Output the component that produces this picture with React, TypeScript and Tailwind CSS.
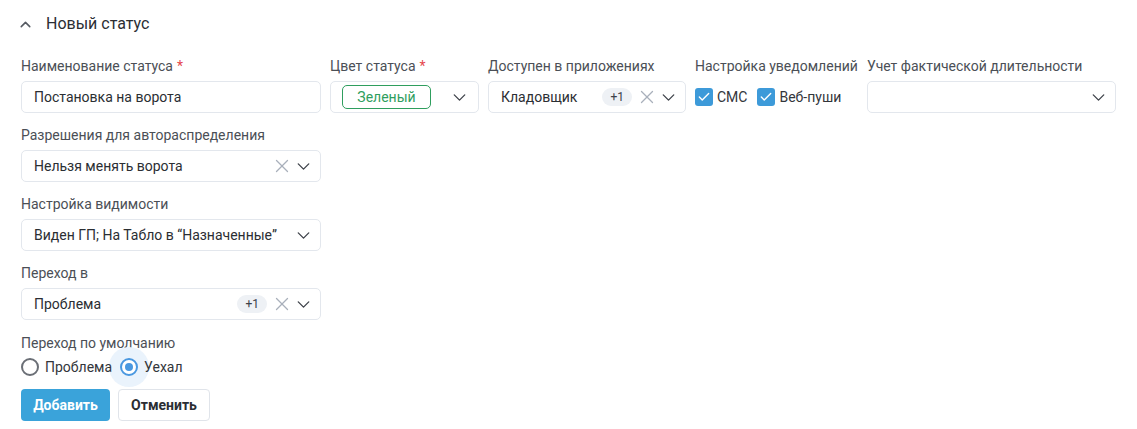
import { Check, ChevronDown, ChevronUp, X } from 'lucide-react';

function Label({ text, required }: { text: string; required?: boolean }) {
  return (
    <div className="h-5 mb-[5px] text-[14px] leading-5 text-[#4b4f56] whitespace-nowrap">
      {text}
      {required && <span className="text-[#e5484d] ml-1">*</span>}
    </div>
  );
}

function Chevron() {
  return <ChevronDown size={21} strokeWidth={1.5} className="text-[#3c4048] shrink-0 -mx-[4px]" />;
}

function Clear() {
  return <X size={22} strokeWidth={1.4} className="text-[#a9b0bb] shrink-0 -mx-[4px]" />;
}

function Badge() {
  return (
    <span className="h-[18px] px-[8px] rounded-full bg-[#eef1f5] text-[12px] leading-[18px] text-[#3c4048] shrink-0">
      +1
    </span>
  );
}

interface SelectProps {
  value?: string;
  badge?: boolean;
  clear?: boolean;
}

function Select({ value, badge, clear }: SelectProps) {
  return (
    <div className="h-8 flex items-center border border-[#e3e7ed] rounded-[5px] bg-white pl-[12px] pr-[10px] gap-[8px]">
      <span className="flex-1 truncate text-[14px] text-[#2b2e33]">{value}</span>
      {badge && <Badge />}
      {clear && <Clear />}
      <Chevron />
    </div>
  );
}

function Checkbox({ label }: { label: string }) {
  return (
    <label className="flex items-center gap-[4px]">
      <span className="w-[18px] h-[18px] rounded-[3px] bg-[#3d9ad9] flex items-center justify-center">
        <Check size={14} strokeWidth={2.4} className="text-white" />
      </span>
      <span className="text-[14px] text-[#33363b]">{label}</span>
    </label>
  );
}

export default function App() {
  return (
    <div className="w-[1137px] h-[429px] bg-white font-['Roboto',sans-serif] pl-[21px] pt-[13px]">
      {/* Section header */}
      <div className="flex items-center h-[22px] -ml-[4px]">
        <ChevronUp size={17} strokeWidth={2.2} className="text-[#555a62]" />
        <span className="ml-[12px] text-[16px] text-[#2b2e33]">Новый статус</span>
      </div>

      {/* First row */}
      <div className="flex gap-[9px] mt-[21px]">
        <div className="w-[300px]">
          <Label text="Наименование статуса" required />
          <div className="h-8 flex items-center border border-[#e3e7ed] rounded-[5px] px-[12px] text-[14px] text-[#2b2e33]">
            Постановка на ворота
          </div>
        </div>
        <div className="w-[149px]">
          <Label text="Цвет статуса" required />
          <div className="h-8 flex items-center border border-[#e3e7ed] rounded-[5px] pl-[11px] pr-[12px]">
            <span className="w-[89px] h-[24px] flex items-center justify-center border border-[#2f9e5e] rounded-[5px] text-[14px] text-[#2f9e5e]">
              Зеленый
            </span>
            <span className="flex-1" />
            <Chevron />
          </div>
        </div>
        <div className="w-[198px]">
          <Label text="Доступен в приложениях" />
          <Select value="Кладовщик" badge clear />
        </div>
        <div className="w-[163px]">
          <Label text="Настройка уведомлений" />
          <div className="h-8 flex items-center gap-[10px]">
            <Checkbox label="СМС" />
            <Checkbox label="Веб-пуши" />
          </div>
        </div>
        <div className="w-[249px]">
          <Label text="Учет фактической длительности" />
          <Select />
        </div>
      </div>

      {/* Stacked fields */}
      <div className="w-[300px] flex flex-col gap-[12px] mt-[12px]">
        <div>
          <Label text="Разрешения для автораспределения" />
          <Select value="Нельзя менять ворота" clear />
        </div>
        <div>
          <Label text="Настройка видимости" />
          <Select value="Виден ГП; На Табло в “Назначенные”" />
        </div>
        <div>
          <Label text="Переход в" />
          <Select value="Проблема" badge clear />
        </div>
        <div className="mt-[1px]">
          <div className="h-5 text-[14px] leading-5 text-[#4b4f56]">Переход по умолчанию</div>
          <div className="flex items-center h-[28px]">
            <label className="relative z-[1] flex items-center gap-[6px]">
              <span className="w-[18px] h-[18px] rounded-full border-[2px] border-[#6b6f76]" />
              <span className="text-[14px] text-[#33363b]">Проблема</span>
            </label>
            <label className="flex items-center gap-[6px] ml-[8px]">
              <span className="relative w-[18px] h-[18px] flex items-center justify-center">
                <span className="absolute -inset-[11px] rounded-full bg-[#eaf3fc]" />
                <span className="relative w-[18px] h-[18px] rounded-full border-[2px] border-[#4a98e0] flex items-center justify-center bg-white">
                  <span className="w-[8px] h-[8px] rounded-full bg-[#4a98e0]" />
                </span>
              </span>
              <span className="relative text-[14px] text-[#33363b]">Уехал</span>
            </label>
          </div>
        </div>
      </div>

      {/* Actions */}
      <div className="flex gap-[8px] mt-[8px]">
        <button className="h-[32px] w-[89px] rounded-[4px] bg-[#3aa3da] text-white text-[14px] font-bold">
          Добавить
        </button>
        <button className="h-[32px] w-[92px] rounded-[4px] bg-white border border-[#e0e4ea] text-[#2b2e33] text-[14px] font-bold">
          Отменить
        </button>
      </div>
    </div>
  );
}
